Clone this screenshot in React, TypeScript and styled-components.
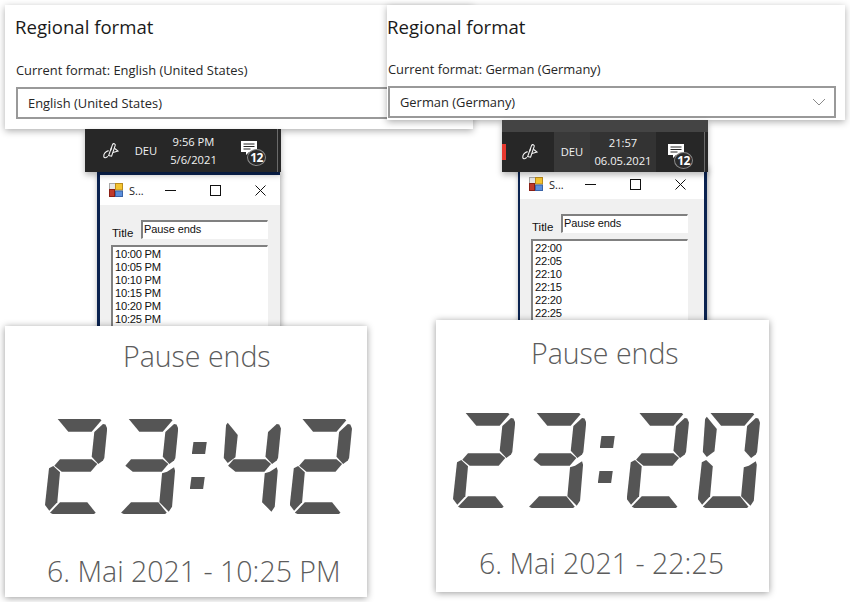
import styled, { createGlobalStyle } from "styled-components";

const GlobalStyle = createGlobalStyle`
  html, body {
    margin: 0;
    background: #fff;
  }
`;

// every segment as clip polygon inside a 62x95 digit box
const SEGMENTS: Record<string, string> = {
  a: "12.7px 0, 55px 0, 56.5px 1.2px, 46.7px 12.7px, 23.3px 12.7px",
  b: "58px 5px, 60.5px 5.5px, 62.2px 9.5px, 59.3px 39px, 58px 41.5px, 53.3px 45px, 46.7px 37.7px, 49.3px 13px",
  c: "51px 52.7px, 58px 48.3px, 59px 51.7px, 56px 87.7px, 52.7px 92.7px, 43.3px 83.3px, 46px 54.3px",
  d: "5px 93.7px, 15px 83.3px, 42.3px 83.3px, 50.7px 93.7px, 49px 95px, 7.7px 95px",
  e: "4px 49.3px, 8.3px 47px, 15px 53.3px, 12.3px 83.3px, 4.3px 91.7px, 0 86px, 0.3px 83px",
  f: "9px 3.7px, 19px 16px, 16.7px 38.3px, 9px 44px, 5px 39px, 7.3px 6px",
  g: "9.3px 46.7px, 15px 40.3px, 46.7px 40.3px, 52.3px 45px, 45.7px 52.7px, 16.7px 52.7px",
};

const DIGIT_SEGMENTS: Record<string, string> = {
  "0": "abcdef",
  "2": "abged",
  "3": "abgcd",
  "4": "fgbc",
};

const Canvas = styled.div`
  position: relative;
  width: 850px;
  height: 602px;
  overflow: hidden;
  background: #fff;
`;

const Panel = styled.section<{ $left: number; $width: number; $height: number; $pad: number; $z: number }>`
  position: absolute;
  left: ${(p) => p.$left}px;
  top: 5px;
  z-index: ${(p) => p.$z};
  width: ${(p) => p.$width}px;
  height: ${(p) => p.$height}px;
  box-sizing: border-box;
  padding: 8px 0 0 ${(p) => p.$pad}px;
  background: #fff;
  box-shadow: 0 2px 7px rgba(0, 0, 0, 0.32);
  font-family: "Open Sans", sans-serif;
  color: #1a1a1a;
`;

const PanelTitle = styled.h2`
  margin: 0 0 0 -1px;
  font-size: 18.6px;
  font-weight: 400;
  line-height: 27px;
`;

const CurrentFormat = styled.div`
  margin-top: 21px;
  font-size: 12.9px;
  line-height: 18px;
  color: #262626;
`;

const Select = styled.div<{ $width: number }>`
  display: flex;
  align-items: center;
  justify-content: space-between;
  box-sizing: border-box;
  width: ${(p) => p.$width}px;
  height: 32px;
  margin-top: 8px;
  padding: 0 8px 0 10px;
  border: 2px solid #999;
  font-size: 12.9px;
  color: #262626;
`;

const Taskbar = styled.div<{ $left: number; $top: number; $width: number; $z: number }>`
  position: absolute;
  left: ${(p) => p.$left}px;
  top: ${(p) => p.$top}px;
  z-index: ${(p) => p.$z};
  display: flex;
  flex-direction: column;
  justify-content: flex-end;
  width: ${(p) => p.$width}px;
  height: 172px;
  height: ${(p) => 172 - p.$top}px;
  background: #444;
  box-shadow: 0 3px 6px rgba(0, 0, 0, 0.28);
  font-family: "Open Sans", sans-serif;
  color: #f2f2f2;
`;

const TrayRow = styled.div`
  display: flex;
  align-items: stretch;
  height: 40px;
  background: #272727;
`;

const TrayCell = styled.div<{ $width: number; $bg?: string }>`
  position: relative;
  display: flex;
  flex-direction: column;
  align-items: center;
  justify-content: center;
  width: ${(p) => p.$width}px;
  background: ${(p) => p.$bg ?? "transparent"};
  font-size: 11.2px;
  line-height: 18px;
`;

const RedMark = styled.div`
  width: 4px;
  height: 16px;
  align-self: center;
  background: #e8392f;
`;

const TrayDivider = styled.div`
  width: 1px;
  margin-left: auto;
  margin-right: 3px;
  background: #6a6a6a;
`;

const Bubble = styled.svg`
  position: absolute;
  left: 0;
  top: 0;
`;

const Badge = styled.div`
  position: absolute;
  display: flex;
  align-items: center;
  justify-content: center;
  box-sizing: border-box;
  width: 19px;
  height: 17px;
  border: 1.5px solid #8a8a8a;
  border-radius: 50%;
  background: #2b2b2b;
  color: #fff;
  font-size: 12px;
  font-weight: 700;
  letter-spacing: -0.6px;
`;

const AppWindow = styled.div<{ $left: number; $top: number; $width: number; $side: "left" | "right"; $z: number }>`
  position: absolute;
  left: ${(p) => p.$left}px;
  top: ${(p) => p.$top}px;
  z-index: ${(p) => p.$z};
  width: ${(p) => p.$width}px;
  height: 180px;
  box-sizing: border-box;
  overflow: hidden;
  border-top: 3px solid #0b2350;
  border-left: ${(p) => (p.$side === "left" ? 3 : 2)}px solid #0b2350;
  border-right: ${(p) => (p.$side === "right" ? 3 : 0)}px solid #0b2350;
  background: #f0f0f0;
  box-shadow: 1px 1px 6px rgba(0, 0, 0, 0.35);
  font-family: "Liberation Sans", sans-serif;
`;

const TitleBar = styled.div<{ $pad: number }>`
  display: flex;
  align-items: center;
  height: 30px;
  padding-left: ${(p) => p.$pad}px;
  background: #fff;
  font-family: "Open Sans", sans-serif;
  font-size: 11px;
  color: #222;
`;

const WindowName = styled.span`
  margin-left: 6px;
`;

const Controls = styled.div<{ $inset: number }>`
  display: flex;
  margin-left: auto;
  margin-right: ${(p) => p.$inset}px;
  flex: none;
`;

const ControlButton = styled.div`
  display: flex;
  align-items: center;
  justify-content: center;
  width: 45px;
  height: 30px;
`;

const Client = styled.div<{ $pad: number }>`
  display: flex;
  flex-direction: column;
  gap: 6px;
  width: 157px;
  padding: 15px 0 0 ${(p) => p.$pad}px;
`;

const FieldRow = styled.div`
  display: flex;
  align-items: flex-end;
  justify-content: space-between;
  padding-left: 1px;
  font-size: 11.5px;
  color: #111;
`;

const TitleInput = styled.div`
  width: 127px;
  height: 19px;
  box-sizing: border-box;
  padding-left: 1px;
  border: 1px solid #fff;
  border-top: 2px solid #808080;
  border-left: 2px solid #808080;
  background: #fff;
  font-size: 11px;
  line-height: 14px;
  letter-spacing: -0.1px;
  color: #111;
`;

const TimeList = styled.ul`
  width: 157px;
  height: 110px;
  box-sizing: border-box;
  margin: 0;
  padding: 1px 0 0 2px;
  list-style: none;
  border: 1px solid #fff;
  border-top: 2px solid #808080;
  border-left: 2px solid #808080;
  background: #fff;
  font-size: 11.2px;
  line-height: 13px;
  letter-spacing: -0.25px;
  color: #111;
`;

const ClockCard = styled.section<{ $left: number; $top: number; $width: number; $height: number }>`
  position: absolute;
  left: ${(p) => p.$left}px;
  top: ${(p) => p.$top}px;
  z-index: 6;
  width: ${(p) => p.$width}px;
  height: ${(p) => p.$height}px;
  background: #fff;
  box-shadow: 0 1px 7px rgba(0, 0, 0, 0.4);
  font-family: "Open Sans", sans-serif;
  font-weight: 300;
  color: #5c5c5c;
`;

const ClockTitle = styled.h1<{ $left: number; $top: number }>`
  height: ${(p) => 93 - p.$top}px;
  margin: 0;
  padding: ${(p) => p.$top}px 0 0 ${(p) => p.$left}px;
  font-size: 28.5px;
  font-weight: 300;
  line-height: 42px;
  white-space: nowrap;
`;

const Display = styled.div<{ $left: number }>`
  display: flex;
  gap: 8.67px;
  height: 95px;
  padding-left: ${(p) => p.$left}px;
`;

const HiddenText = styled.span`
  position: absolute;
  width: 1px;
  height: 1px;
  overflow: hidden;
  clip-path: inset(50%);
`;

const Digit = styled.div`
  position: relative;
  flex: none;
  width: 62.4px;
  height: 95px;
`;

const Segment = styled.i<{ $points: string }>`
  position: absolute;
  inset: 0;
  background: #555;
  clip-path: polygon(${(p) => p.$points});
`;

const Colon = styled.div`
  display: flex;
  flex-direction: column;
  flex: none;
  gap: 22.4px;
  width: 23px;
  padding-top: 22.7px;
`;

const ColonDot = styled.i<{ $shift: number }>`
  width: 15px;
  height: 12.6px;
  margin-left: ${(p) => p.$shift}px;
  background: #555;
  clip-path: polygon(1.7px 0, 15px 0, 13.3px 100%, 0 100%);
`;

const ClockDate = styled.div<{ $left: number; $top: number }>`
  margin-top: ${(p) => p.$top}px;
  padding-left: ${(p) => p.$left}px;
  font-size: 28.5px;
  line-height: 42px;
  white-space: nowrap;
`;

const SegmentDigit = ({ value }: { value: string }) => (
  <Digit>
    {DIGIT_SEGMENTS[value].split("").map((s) => (
      <Segment key={s} $points={SEGMENTS[s]} />
    ))}
  </Digit>
);

const SegmentClock = ({ time, left }: { time: string; left: number }) => {
  const [hours, minutes] = time.split(":");
  return (
    <Display $left={left}>
      <HiddenText>{time}</HiddenText>
      {hours.split("").map((d, i) => (
        <SegmentDigit key={i} value={d} />
      ))}
      <Colon>
        <ColonDot $shift={4.7} />
        <ColonDot $shift={2.7} />
      </Colon>
      {minutes.split("").map((d, i) => (
        <SegmentDigit key={i} value={d} />
      ))}
    </Display>
  );
};

const PenIcon = () => (
  <svg width="20" height="20" viewBox="0 0 20 20" fill="none" stroke="#f4f4f4" strokeWidth="1.1">
    <path d="M7.6 14.6 L11.6 3.4 a1.4 1.4 0 0 1 2.6 1 L10.6 15.2 Z" />
    <path d="M9.8 9.4 L10.6 6.2 M13.4 7.2 L17 10 L12 11.6" />
    <path d="M7.6 9.6 C4.6 10.4 2.4 13 2.8 15.6 C3.2 17.4 5.4 16.8 6.8 15.4" />
  </svg>
);

const MessageIcon = ({ count }: { count: number }) => (
  <TrayCell $width={30}>
    <Bubble width="17" height="15" viewBox="0 0 17 15" style={{ left: 5, top: 12 }}>
      <path d="M0 0 H16 V11 H8 L5 14 V11 H0 Z" fill="#fff" />
      <path d="M2.5 3 H13.5 M2.5 5.5 H13.5 M2.5 8 H9.5" stroke="#272727" strokeWidth="1" />
    </Bubble>
    <Badge style={{ left: 11, top: 20 }}>{count}</Badge>
  </TrayCell>
);

const AppIcon = () => (
  <svg width="14" height="14" viewBox="0 0 14 14">
    <rect x="0.5" y="0.5" width="6" height="6" fill="#e8e8e8" stroke="#a8a8a8" />
    <rect x="6.5" y="0.5" width="7" height="6.5" fill="#f4c430" stroke="#b98b1d" />
    <rect x="0.5" y="6.5" width="5" height="7" fill="#c0392b" stroke="#8a1f15" />
    <rect x="6.5" y="8" width="7" height="5.5" fill="#5b8fdc" stroke="#3b64a8" />
  </svg>
);

const WindowControls = ({ inset }: { inset: number }) => (
  <Controls $inset={inset}>
    <ControlButton>
      <svg width="11" height="11" viewBox="0 0 11 11">
        <path d="M0 5.5 H11" stroke="#111" strokeWidth="1" />
      </svg>
    </ControlButton>
    <ControlButton>
      <svg width="11" height="11" viewBox="0 0 11 11" fill="none">
        <rect x="0.5" y="0.5" width="10" height="10" stroke="#111" />
      </svg>
    </ControlButton>
    <ControlButton>
      <svg width="11" height="11" viewBox="0 0 11 11">
        <path d="M0.5 0.5 L10.5 10.5 M10.5 0.5 L0.5 10.5" stroke="#111" strokeWidth="1" />
      </svg>
    </ControlButton>
  </Controls>
);

const EN_TIMES = ["10:00 PM", "10:05 PM", "10:10 PM", "10:15 PM", "10:20 PM", "10:25 PM"];
const DE_TIMES = ["22:00", "22:05", "22:10", "22:15", "22:20", "22:25"];

const App = () => {
  return (
    <Canvas>
      <GlobalStyle />

      <Panel $left={5} $width={468} $height={124} $pad={11} $z={1}>
        <PanelTitle>Regional format</PanelTitle>
        <CurrentFormat>Current format: English (United States)</CurrentFormat>
        <Select $width={445}>English (United States)</Select>
      </Panel>

      <Panel $left={387} $width={458} $height={115} $pad={1} $z={2}>
        <PanelTitle>Regional format</PanelTitle>
        <CurrentFormat style={{ marginTop: 20 }}>Current format: German (Germany)</CurrentFormat>
        <Select $width={448}>
          German (Germany)
          <svg width="14" height="8" viewBox="0 0 14 8" fill="none">
            <path d="M1 1 L7 7 L13 1" stroke="#8a8a8a" strokeWidth="1" />
          </svg>
        </Select>
      </Panel>

      <AppWindow $left={97} $top={172} $width={183} $side="left" $z={3}>
        <TitleBar $pad={9}>
          <AppIcon />
          <WindowName>S...</WindowName>
          <WindowControls inset={-3} />
        </TitleBar>
        <Client $pad={11}>
          <FieldRow>
            Title
            <TitleInput>Pause ends</TitleInput>
          </FieldRow>
          <TimeList>
            {EN_TIMES.map((t) => (
              <li key={t}>{t}</li>
            ))}
          </TimeList>
        </Client>
      </AppWindow>

      <AppWindow $left={518} $top={166} $width={189} $side="right" $z={3}>
        <TitleBar $pad={9}>
          <AppIcon />
          <WindowName>S...</WindowName>
          <WindowControls inset={1} />
        </TitleBar>
        <Client $pad={11}>
          <FieldRow>
            Title
            <TitleInput>Pause ends</TitleInput>
          </FieldRow>
          <TimeList>
            {DE_TIMES.map((t) => (
              <li key={t}>{t}</li>
            ))}
          </TimeList>
        </Client>
      </AppWindow>

      <Taskbar $left={85} $top={129} $width={196} $z={4}>
        <TrayRow style={{ height: 43 }}>
          <TrayCell $width={11} />
          <TrayCell $width={30}>
            <PenIcon />
          </TrayCell>
          <TrayCell $width={40}>DEU</TrayCell>
          <TrayCell $width={55}>
            <span>9:56 PM</span>
            <span>5/6/2021</span>
          </TrayCell>
          <TrayCell $width={15} />
          <MessageIcon count={12} />
          <TrayDivider />
        </TrayRow>
      </Taskbar>

      <Taskbar $left={502} $top={120} $width={206} $z={4}>
        <TrayRow>
          <RedMark />
          <TrayCell $width={48}>
            <PenIcon />
          </TrayCell>
          <TrayCell $width={36} $bg="#393939">
            DEU
          </TrayCell>
          <TrayCell $width={66} $bg="#333">
            <span>21:57</span>
            <span>06.05.2021</span>
          </TrayCell>
          <TrayCell $width={7} />
          <MessageIcon count={12} />
          <TrayDivider />
        </TrayRow>
      </Taskbar>

      <ClockCard $left={5} $top={326} $width={362} $height={271}>
        <ClockTitle $left={118} $top={9}>
          Pause ends
        </ClockTitle>
        <SegmentClock time="23:42" left={40} />
        <ClockDate $left={42} $top={36}>
          6. Mai 2021 - 10:25 PM
        </ClockDate>
      </ClockCard>

      <ClockCard $left={436} $top={320} $width={333} $height={272}>
        <ClockTitle $left={95} $top={12}>
          Pause ends
        </ClockTitle>
        <SegmentClock time="23:20" left={17} />
        <ClockDate $left={43} $top={34}>
          6. Mai 2021 - 22:25
        </ClockDate>
      </ClockCard>
    </Canvas>
  );
};

export default App;
